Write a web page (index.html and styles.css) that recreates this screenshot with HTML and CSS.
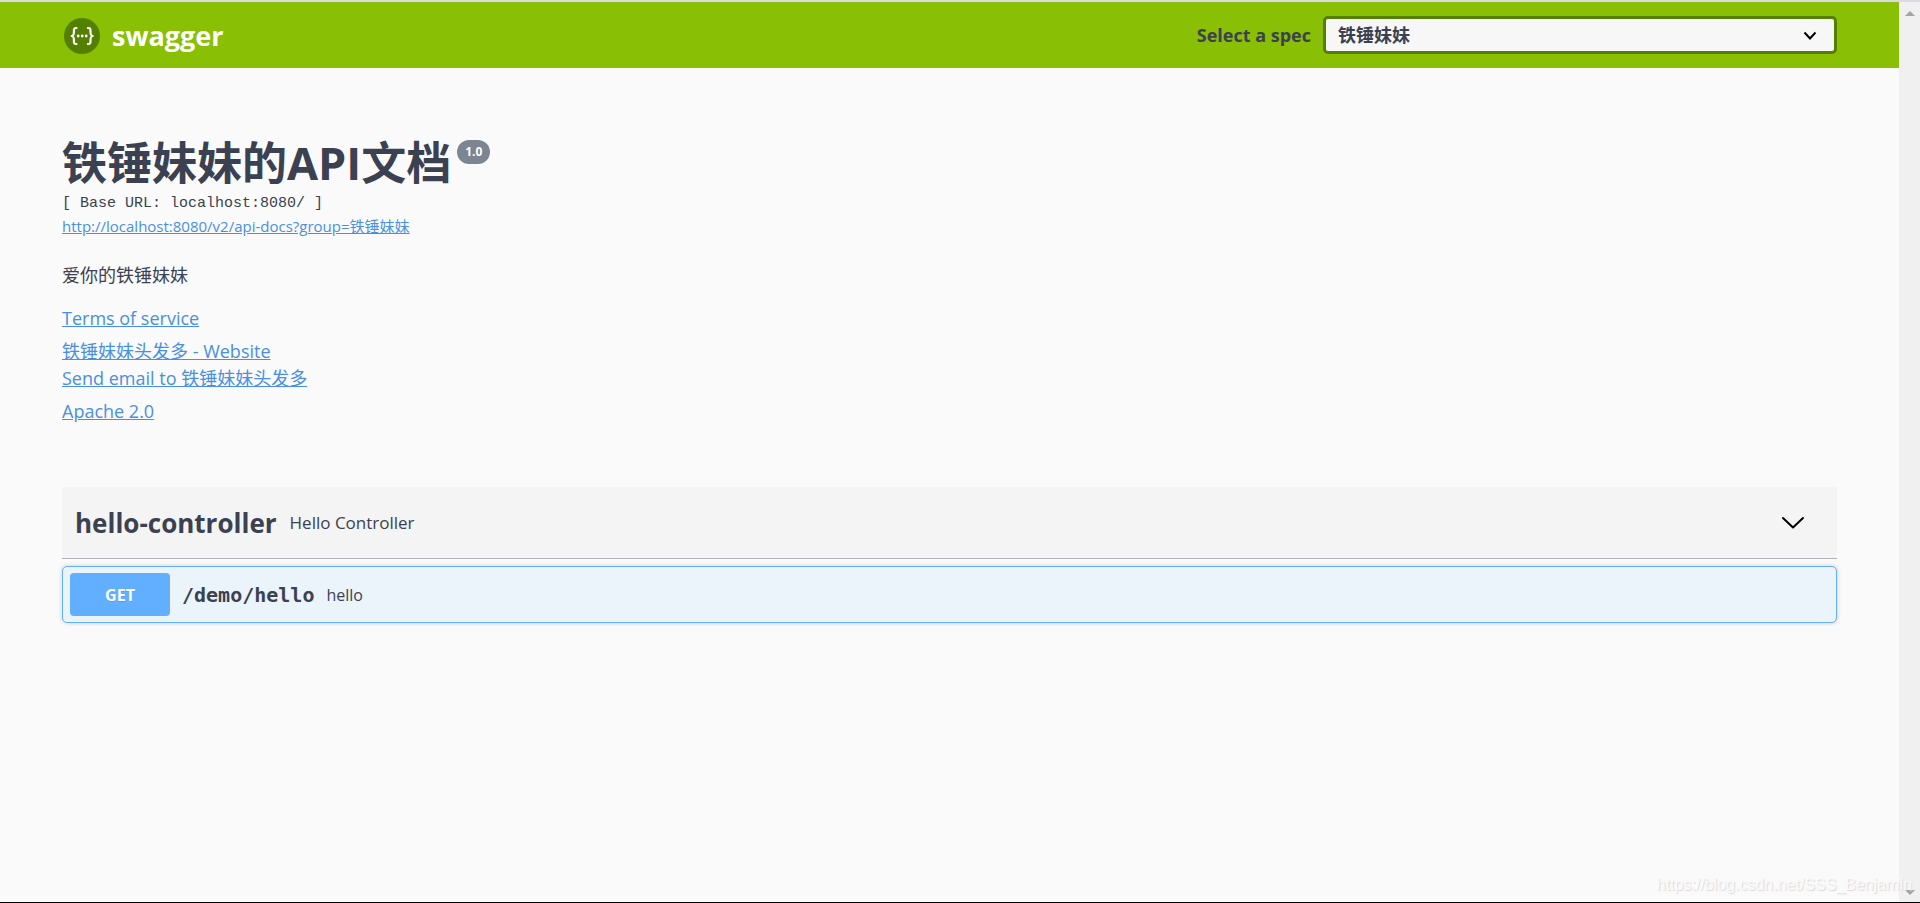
FILE: index.html
```html
<!DOCTYPE html>
<html lang="zh-CN">
<head>
<meta charset="utf-8">
<title>Swagger UI</title>
<link rel="stylesheet" href="styles.css">
</head>
<body>
<div class="viewport">
  <div class="page">
    <header class="topbar">
      <a class="brand" href="#">
        <svg class="brand-mark" viewBox="0 0 36 36" aria-hidden="true">
          <circle cx="18" cy="18" r="18" fill="#547f00"/>
          <g fill="none" stroke="#fff" stroke-width="2.2" stroke-linecap="round" stroke-linejoin="round">
            <path d="M12.500 10c-2.600 0-2.600 1-2.600 3.600 0 3-.2 4.200-2.200 4.400 2 .2 2.200 1.400 2.200 4.400 0 2.600 0 3.600 2.600 3.600"/>
            <path d="M23.900 10c2.600 0 2.600 1 2.600 3.600 0 3 .2 4.200 2.200 4.400-2 .2-2.200 1.400-2.200 4.400 0 2.600 0 3.600-2.600 3.600"/>
          </g>
          <g fill="#fff"><circle cx="14.200" cy="18" r="1.400"/><circle cx="18.200" cy="18" r="1.400"/><circle cx="22.200" cy="18" r="1.400"/></g>
        </svg>
        <span>swagger</span>
      </a>
      <form class="spec">
        <label for="spec">Select a spec</label>
        <span class="select-wrap">
          <select id="spec"><option>铁锤妹妹</option></select>
          <svg class="select-arrow" viewBox="0 0 14 10" aria-hidden="true"><path d="M1.500 1.500 7 7.500l5.500-6" fill="none" stroke="#000" stroke-width="2"/></svg>
        </span>
      </form>
    </header>
    <main class="content">
      <section class="info">
        <h1 class="title">铁锤妹妹的API文档<span class="version">1.0</span></h1>
        <pre class="base-url">[ Base URL: localhost:8080/ ]</pre>
        <a class="docs-link" href="#">http://localhost:8080/v2/api-docs?group=铁锤妹妹</a>
        <p class="description">爱你的铁锤妹妹</p>
        <div class="links">
          <div><a href="#">Terms of service</a></div>
          <div class="contact"><a href="#">铁锤妹妹头发多 - Website</a><a href="#">Send email to 铁锤妹妹头发多</a></div>
          <div><a href="#">Apache 2.0</a></div>
        </div>
      </section>
      <section class="tag-section">
        <div class="tag">
          <h2>hello-controller</h2>
          <small>Hello Controller</small>
          <button class="expand" type="button" aria-label="Collapse operation">
            <svg viewBox="0 0 24 14" aria-hidden="true"><path d="M2 2l10 9.500L22 2" fill="none" stroke="#000" stroke-width="2" stroke-linecap="round" stroke-linejoin="round"/></svg>
          </button>
        </div>
        <div class="operation">
          <button class="method" type="button">GET</button>
          <a class="path" href="#">/demo/hello</a>
          <span class="summary">hello</span>
        </div>
      </section>
    </main>
  </div>
  <div class="scrollbar" aria-hidden="true">
    <svg viewBox="0 0 10 5"><path d="M0 5 5 0l5 5z"/></svg>
    <svg viewBox="0 0 10 5"><path d="M0 0h10L5 5z"/></svg>
  </div>
  <div class="watermark">https://blog.csdn.net/SSS_Benjamin</div>
</div>
</body>
</html>
```

FILE: styles.css
```css
* { box-sizing: border-box; }

body {
  margin: 0;
  background: #fafafa;
  color: #3b4151;
  font-family: "Open Sans", "Noto Sans CJK SC", sans-serif;
  font-size: 18px;
}

.viewport {
  position: relative;
  display: flex;
  min-height: 100vh;
  border-top: 2px solid #dcdce0;
  border-bottom: 1px solid #000;
}

.page { flex: 1; min-width: 0; }

.topbar {
  display: flex;
  align-items: center;
  justify-content: space-between;
  height: 66px;
  padding: 0 62px;
  background: #89bf04;
}

.brand {
  display: flex;
  align-items: center;
  gap: 12px;
  padding: 2px 0 0 2px;
  color: #fff;
  font-size: 27px;
  font-weight: 700;
  line-height: 36px;
  text-decoration: none;
}

.brand-mark { width: 36px; height: 36px; }

.spec {
  display: flex;
  align-items: center;
  gap: 12px;
  font-weight: 700;
}

.spec label { white-space: nowrap; }

.select-wrap { position: relative; flex: none; width: 514px; }

.select-wrap select {
  display: block;
  width: 100%;
  height: 38px;
  padding: 0 50px 0 12px;
  appearance: none;
  border: 3px solid #547f00;
  border-radius: 5px;
  background: #f7f7f7;
  color: #3b4151;
  font: inherit;
}

.select-arrow {
  position: absolute;
  top: 15px;
  right: 20px;
  width: 14px;
  height: 10px;
  pointer-events: none;
}

.content { padding: 62px 62px 0; }

.title {
  display: flex;
  align-items: flex-start;
  gap: 6px;
  margin: 0;
  font-size: 45px;
  line-height: 66px;
}

.version {
  margin-top: 10px;
  padding: 0 8px;
  border-radius: 12px;
  background: #7d8492;
  color: #fff;
  font-size: 12px;
  line-height: 24px;
}

.base-url {
  margin: 0;
  font-family: "Liberation Mono", monospace;
  font-size: 15px;
  line-height: 16px;
}

a { color: #4990e2; }

.docs-link {
  display: block;
  width: fit-content;
  margin-top: 1px;
  font-size: 15px;
  line-height: 26px;
}

.description { margin: 23px 0 16px; line-height: 27px; }

.links {
  display: flex;
  flex-direction: column;
  gap: 6px;
  line-height: 27px;
}

.contact {
  display: flex;
  flex-direction: column;
  align-items: flex-start;
}

.tag-section { margin-top: 62px; }

.tag {
  display: flex;
  align-items: center;
  gap: 13px;
  height: 72px;
  padding: 0 29px 0 13px;
  border-bottom: 1px solid #b1b4b9;
  background: #f4f4f4;
}

.tag h2 { margin: 0; font-size: 26px; line-height: 36px; }
.tag small { flex: 1; font-size: 17px; }

.expand {
  width: 30px;
  height: 30px;
  padding: 7px 3px;
  border: 0;
  background: none;
}

.expand svg { display: block; width: 24px; height: 14px; }

.operation {
  display: flex;
  align-items: center;
  gap: 12px;
  margin-top: 7px;
  padding: 6px 7px;
  border: 1px solid #61affe;
  border-radius: 5px;
  background: #ebf3fb;
  box-shadow: 0 0 4px rgba(0, 0, 0, .19);
}

.method {
  width: 100px;
  height: 43px;
  padding: 0;
  border: 0;
  border-radius: 4px;
  background: #61affe;
  color: #fff;
  font: 700 16px "Open Sans", sans-serif;
  text-shadow: 0 1px 0 rgba(0, 0, 0, .1);
}

.path {
  color: #3b4151;
  font: 700 20px "DejaVu Sans Mono", monospace;
  text-decoration: none;
}

.summary { font-size: 16px; }

.scrollbar {
  display: flex;
  flex-direction: column;
  justify-content: space-between;
  align-items: center;
  width: 21px;
  padding: 9px 0 7px;
  background: #f0f0f0;
  fill: #a3a3a3;
}

.scrollbar svg { width: 10px; height: 5px; }

.watermark {
  position: absolute;
  right: 8px;
  bottom: 8px;
  color: #fafafa;
  font: 16px "Liberation Sans", sans-serif;
  text-shadow: 1px 1px 1px #d8d8d8;
}
```
